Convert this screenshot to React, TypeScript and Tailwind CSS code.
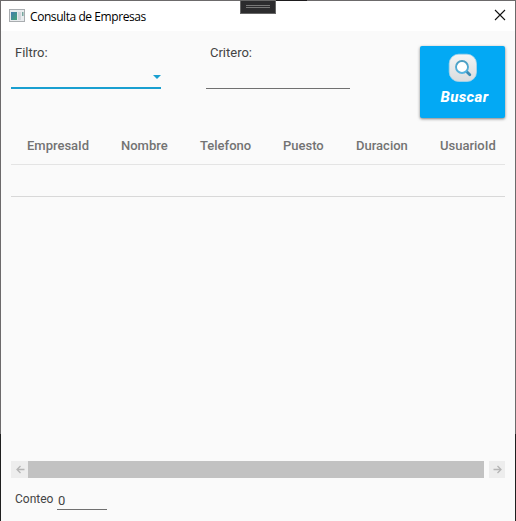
import React from "react";

function TitleBar() {
  return (
    <header className="relative flex h-[30px] shrink-0 items-center bg-white pl-2 pr-[9px]">
      <svg width="16" height="14" viewBox="0 0 16 14" className="mr-[5px]">
        <defs>
          <linearGradient id="pane" x1="0" y1="0" x2="1" y2="1">
            <stop offset="0" stopColor="#427cae" />
            <stop offset="1" stopColor="#46a477" />
          </linearGradient>
        </defs>
        <rect x=".5" y=".5" width="15" height="12" fill="#e9ecee" stroke="#a9adb0" />
        <rect x="2" y="3" width="6" height="8" fill="url(#pane)" />
        <rect x="9" y="3" width="3" height="8" fill="#d3d6dc" />
        <rect x="13" y="3" width="1.5" height="4" fill="#78a79f" />
      </svg>
      <h1 className="mt-px whitespace-nowrap font-['Open_Sans','Noto_Sans',sans-serif] text-[12px] leading-[16px] tracking-[-0.43px] text-black">
        Consulta de Empresas
      </h1>
      <button className="-mt-[3px] ml-auto" aria-label="Cerrar">
        <svg width="12" height="12" viewBox="0 0 12 12" stroke="#111" strokeWidth="1.1">
          <path d="M1 1 11 11M11 1 1 11" />
        </svg>
      </button>
      <div className="absolute left-[239px] -top-px flex h-[14px] w-[36px] flex-col items-center gap-px border border-[#666] bg-[#2c2c2e] pt-1">
        <i className="h-px w-6 bg-[#777]" />
        <i className="h-px w-6 bg-[#777]" />
      </div>
      <i className="absolute -top-px left-[275px] h-px w-[31px] bg-[#1d1b1d]" />
    </header>
  );
}

function SearchIcon() {
  return (
    <svg width="30" height="30" viewBox="0 0 30 30">
      <defs>
        <linearGradient id="tile" x1="0" y1="0" x2="0" y2="1">
          <stop offset="0" stopColor="#f5f5f5" />
          <stop offset="1" stopColor="#d9dcde" />
        </linearGradient>
        <linearGradient id="lens" x1="0" y1="0" x2="0" y2="1">
          <stop offset="0" stopColor="#4b9dc0" />
          <stop offset="1" stopColor="#55b5e2" />
        </linearGradient>
      </defs>
      <rect x="1.2" y="1.2" width="27.3" height="27.3" rx="9.5" fill="url(#tile)" stroke="#a9d4e8" strokeWidth=".8" />
      <path d="m17.8 17.8 4 4" stroke="#398bb5" strokeWidth="2.8" strokeLinecap="round" />
      <circle cx="14" cy="14" r="6" fill="#fff" stroke="url(#lens)" strokeWidth="1.9" />
    </svg>
  );
}

function Arrow({ right = false }: { right?: boolean }) {
  return (
    <svg width="9" height="9" viewBox="0 0 9 9" fill="none" stroke="#b5b5b5" strokeWidth="1.3" className={right ? "ml-px rotate-180" : "ml-px"}>
      <path d="M8.5 4.5H1M4.5 1 1 4.5 4.5 8" />
    </svg>
  );
}

export default function App() {
  return (
    <main className="flex h-[521px] w-[516px] bg-[#fafafa] font-[Roboto,sans-serif] text-[13px] leading-[16px] text-[#444]">
      <div className="flex w-px shrink-0 flex-col bg-[#1f1f1f]">
        <i className="h-[434px] bg-[#6c6a6b]" />
      </div>
      <div className="flex w-[514px] shrink-0 flex-col border-t border-[#6c6a6b]">
        <TitleBar />
        <section className="flex h-[95px] shrink-0 pl-[10px]">
          <div className="flex h-[58px] w-[150px] flex-col border-b-2 border-[#199fd0] pt-[14px]">
            <label className="pl-1">Filtro:</label>
            <span className="ml-auto mt-[14px] h-0 w-0 border-x-4 border-t-4 border-x-transparent border-t-[#199fd0]" />
          </div>
          <div className="ml-[45px] flex h-[58px] w-[144px] flex-col border-b border-[#707070] pt-[14px]">
            <label className="pl-1">Critero:</label>
          </div>
          <button className="ml-[70px] mt-[15px] flex h-[72px] w-[85px] flex-col items-center rounded-[2px] bg-[#03a9f4] pt-[7px] shadow-[0_1px_3px_rgba(0,0,0,0.5)]">
            <SearchIcon />
            <span className="pl-1 pt-[6px] text-[15px] font-extrabold italic leading-[16px] tracking-[0.4px] text-white">Buscar</span>
          </button>
        </section>
        <section className="mx-[10px] w-[494px] shrink-0">
          <div className="flex h-[39px] items-center border-b border-[#e4e4e4] pl-4 pt-[2px] font-medium text-[#737373]">
            <span className="w-[94px]">EmpresaId</span>
            <span className="w-[79px]">Nombre</span>
            <span className="w-[83px]">Telefono</span>
            <span className="w-[73px]">Puesto</span>
            <span className="w-[84px]">Duracion</span>
            <span>UsuarioId</span>
          </div>
          <div className="h-8 border-b border-[#d8d8d8]" />
        </section>
        <div className="mx-[10px] mt-auto flex h-[17px] shrink-0 items-center">
          <button className="flex h-full w-[17px] items-center justify-center bg-[#ededed]" aria-label="Izquierda"><Arrow /></button>
          <div className="h-full w-[456px] bg-[#c2c2c2]" />
          <button className="ml-auto flex h-full w-4 items-center justify-center bg-[#ededed]" aria-label="Derecha"><Arrow right /></button>
        </div>
        <footer className="flex h-[43px] shrink-0 pl-[14px]">
          <label className="w-[42px] pt-[13px] text-[12px]">Conteo</label>
          <span className="h-8 w-[50px] border-b border-[#707070] pl-[1px] pt-[15px] text-[13px]">0</span>
        </footer>
      </div>
      <div className="flex w-px shrink-0 flex-col bg-[#1f1f1f]">
        <i className="h-[434px] bg-[#6c6a6b]" />
      </div>
    </main>
  );
}
